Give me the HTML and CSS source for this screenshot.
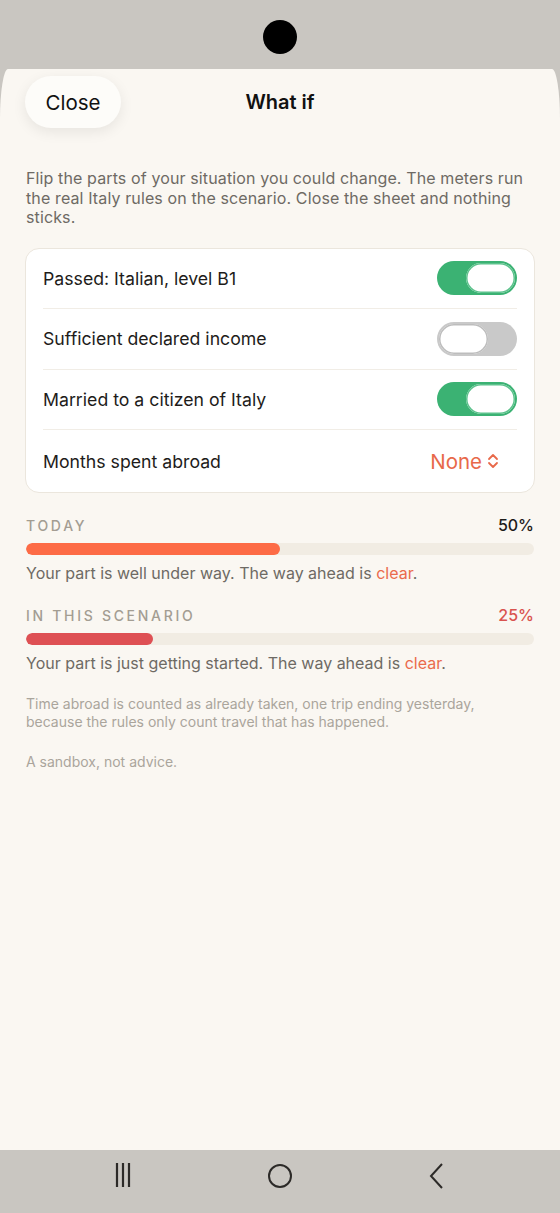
FILE: index.html
```html
<!DOCTYPE html>
<html lang="en">
<head>
<meta charset="utf-8">
<link rel="stylesheet" href="styles.css">
</head>
<body>
<div class="phone">
  <div class="statusbar"><div class="camera"></div></div>
  <div class="sheet">
    <header class="sheet-head">
      <button class="close-btn">Close</button>
      <h1 class="title">What if</h1>
    </header>
    <p class="intro">Flip the parts of your situation you could change. The meters run the real Italy rules on the scenario. Close the sheet and nothing sticks.</p>
    <div class="card">
      <div class="row">
        <span class="row-label">Passed: Italian, level B1</span>
        <span class="toggle on"><span class="knob"></span></span>
      </div>
      <div class="row">
        <span class="row-label">Sufficient declared income</span>
        <span class="toggle off"><span class="knob"></span></span>
      </div>
      <div class="row">
        <span class="row-label">Married to a citizen of Italy</span>
        <span class="toggle on"><span class="knob"></span></span>
      </div>
      <div class="row last">
        <span class="row-label">Months spent abroad</span>
        <span class="picker">None
          <svg class="chev" width="12" height="18" viewBox="0 0 12 18"><path d="M2 7 L6 3 L10 7 M2 11 L6 15 L10 11" fill="none" stroke="currentColor" stroke-width="1.8" stroke-linecap="round" stroke-linejoin="round"/></svg>
        </span>
      </div>
    </div>

    <section class="meter">
      <div class="meter-head">
        <span class="meter-label">TODAY</span>
        <span class="meter-pct">50%</span>
      </div>
      <div class="track"><div class="fill fill-today" style="width:50%"></div></div>
      <p class="meter-text">Your part is well under way. The way ahead is <span class="accent">clear</span>.</p>
    </section>

    <section class="meter">
      <div class="meter-head">
        <span class="meter-label">IN THIS SCENARIO</span>
        <span class="meter-pct red">25%</span>
      </div>
      <div class="track"><div class="fill fill-scen" style="width:25%"></div></div>
      <p class="meter-text">Your part is just getting started. The way ahead is <span class="accent">clear</span>.</p>
    </section>

    <p class="note">Time abroad is counted as already taken, one trip ending yesterday, because the rules only count travel that has happened.</p>
    <p class="note">A sandbox, not advice.</p>
  </div>
  <nav class="navbar">
    <svg width="20" height="26" viewBox="0 0 20 26"><path d="M4 1 V25 M10 1 V25 M16 1 V25" stroke="#2c2a28" stroke-width="2.2"/></svg>
    <svg width="28" height="28" viewBox="0 0 28 28"><circle cx="14" cy="14" r="11" fill="none" stroke="#2c2a28" stroke-width="2"/></svg>
    <svg width="20" height="28" viewBox="0 0 20 28"><path d="M15 2 L4 14 L15 26" fill="none" stroke="#2c2a28" stroke-width="2"/></svg>
  </nav>
</div>
</body>
</html>
```

FILE: styles.css
```css
* { box-sizing: border-box; }
html, body { margin: 0; padding: 0; }
body {
  width: 560px;
  height: 1213px;
  background: #c9c6c1;
  font-family: Inter, "Noto Sans", "Liberation Sans", sans-serif;
  overflow: hidden;
}
.phone {
  display: flex;
  flex-direction: column;
  height: 1213px;
}
.statusbar {
  height: 69px;
  flex: none;
  display: flex;
  justify-content: center;
  padding-top: 20px;
}
.camera {
  width: 34px;
  height: 34px;
  border-radius: 50%;
  background: #000;
}
.sheet {
  flex: 1;
  background: #faf7f2;
  border-top-left-radius: 8px 50px;
  border-top-right-radius: 8px 50px;
  padding: 7px 26px 0 26px;
}
.sheet-head {
  position: relative;
  height: 52px;
  display: flex;
  align-items: center;
  justify-content: center;
}
.close-btn {
  position: absolute;
  left: -1px;
  top: 0;
  height: 52px;
  width: 96px;
  border: none;
  border-radius: 26px;
  background: #fdfcf9;
  box-shadow: 0 4px 14px rgba(0,0,0,0.08);
  font-family: inherit;
  font-size: 20.5px;
  color: #111;
  padding: 0;
}
.title {
  margin: 0;
  font-size: 20px;
  font-weight: 600;
  color: #111;
}
.intro {
  margin: 41px 0 0 0;
  font-size: 16px;
  letter-spacing: 0.12px;
  line-height: 19.5px;
  color: #6e6a64;
}
.card {
  margin: 20px -1px 0 -1px;
  background: #fff;
  border: 1px solid #ebe6dd;
  border-radius: 14px;
  padding: 0 17px;
}
.row {
  height: 60.5px;
  display: flex;
  align-items: center;
  justify-content: space-between;
  border-bottom: 1px solid #f1ede6;
}
.row.last { border-bottom: none; height: 62px; }
.row-label {
  font-size: 17.7px;
  color: #1e1c1a;
}
.toggle {
  width: 80px;
  height: 34px;
  border-radius: 17px;
  display: flex;
  align-items: center;
  padding: 2px;
}
.toggle.on { background: #3bb273; justify-content: flex-end; }
.toggle.off { background: #c9c9c9; justify-content: flex-start; }
.knob {
  width: 49px;
  height: 30px;
  border-radius: 15px;
  background: #fff;
}
.toggle.on .knob { box-shadow: inset 0 0 0 1.5px #5cc28c; }
.toggle.off .knob { box-shadow: inset 0 0 0 1.5px #bdbdbd; }
.picker {
  display: flex;
  align-items: center;
  gap: 5px;
  color: #e8694a;
  font-size: 20.5px;
  margin-right: 18px;
}
.chev { display: block; }
.meter { margin-top: 22px; }
.meter + .meter { margin-top: 22px; }
.meter-head {
  display: flex;
  justify-content: space-between;
  align-items: baseline;
}
.meter-label {
  font-size: 14px;
  letter-spacing: 2.7px;
  color: #a39d92;
  font-weight: 500;
}
.meter-pct {
  font-size: 16px;
  font-weight: 500;
  color: #1e1c1a;
}
.meter-pct.red { color: #d9534f; }
.track {
  margin-top: 8px;
  height: 12px;
  border-radius: 6px;
  background: #f1ece3;
  overflow: hidden;
}
.fill { height: 100%; border-radius: 6px; }
.fill-today { background: #fd6b46; }
.fill-scen { background: #de5054; }
.meter-text {
  margin: 8px 0 0 0;
  font-size: 16px;
  line-height: 20px;
  color: #6e6a64;
}
.accent { color: #ea6b4c; }
.note {
  margin: 22px 0 0 0;
  font-size: 14px;
  line-height: 18px;
  color: #aaa59c;
}
.note + .note { margin-top: 22px; }
.navbar {
  height: 63px;
  flex: none;
  background: #c9c6c1;
  display: flex;
  justify-content: space-between;
  align-items: flex-start;
  padding: 12px 113px 0 113px;
}
```
